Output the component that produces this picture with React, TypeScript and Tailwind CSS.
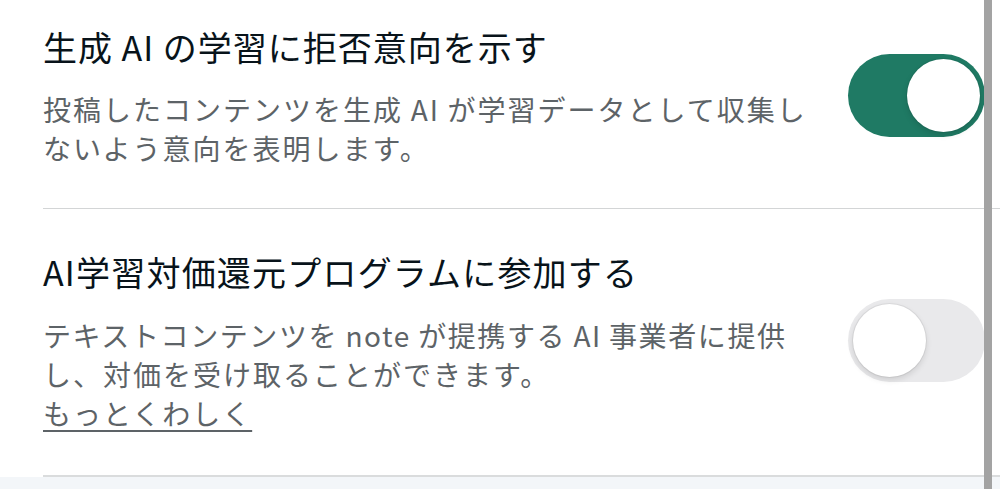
import React, { useState } from 'react';

const Toggle = ({ on, onChange }: { on: boolean; onChange: () => void }) => (
  <button
    type="button"
    onClick={onChange}
    className={`relative flex h-[83px] w-[137px] shrink-0 items-center rounded-full p-[5px] transition-colors ${
      on ? 'justify-end bg-[#1f7a64]' : 'justify-start bg-[#e9e9eb]'
    }`}
  >
    <span className="block h-[73px] w-[73px] rounded-full bg-white shadow-[0_0_0_1px_rgba(0,0,0,0.06),0_3px_6px_rgba(0,0,0,0.12)]" />
  </button>
);

export default function App() {
  const [optOut, setOptOut] = useState(true);
  const [program, setProgram] = useState(false);

  return (
    <div
      className="relative h-[489px] w-full overflow-hidden bg-[#f3f6f9]"
      style={{ fontFamily: '"Noto Sans CJK JP", "Noto Sans", sans-serif' }}
    >
      <div className="bg-white pl-[43px]">
        {/* 生成AI 学習拒否 */}
        <section className="flex items-center border-b border-[#d3d5d6] pt-[23px] pb-[40px]">
          <div className="flex-1">
            <h2 className="text-[34px] leading-[48px] tracking-[1px] text-[#08131a]">生成 AI の学習に拒否意向を示す</h2>
            <p className="mt-[19px] text-[28px] leading-[39px] tracking-[2px] text-[#5d6367]">
              投稿したコンテンツを生成{'\u2009'}AI{'\u2009'}が学習データとして収集し
              <br />
              ないよう意向を表明します。
            </p>
          </div>
          <div className="mr-[15px]">
            <Toggle on={optOut} onChange={() => setOptOut(!optOut)} />
          </div>
        </section>

        {/* 対価還元プログラム */}
        <section className="flex items-center border-b-2 border-[#dadcdd] pt-[39px] pb-[42px]">
          <div className="flex-1">
            <h2 className="text-[34px] leading-[48px] tracking-[1.2px] text-[#08131a]">AI学習対価還元プログラムに参加する</h2>
            <p className="mt-[20px] text-[28px] leading-[39px] tracking-[2px] text-[#5d6367]">
              <span className="tracking-[1.6px]">
                テキストコンテンツを{'\u2009'}note{'\u2009'}が提携する{'\u2009'}AI{'\u2009'}事業者に提供
              </span>
              <br />
              し、対価を受け取ることができます。
              <br />
              <a href="#" className="underline decoration-[1.5px] underline-offset-[5px]">もっとくわしく</a>
            </p>
          </div>
          <div className="mr-[15px]">
            <Toggle on={program} onChange={() => setProgram(!program)} />
          </div>
        </section>
      </div>

      {/* scrollbar */}
      <div className="absolute top-0 right-[8px] bottom-0 w-[8px] bg-[#a3a3a3]" />
    </div>
  );
}
